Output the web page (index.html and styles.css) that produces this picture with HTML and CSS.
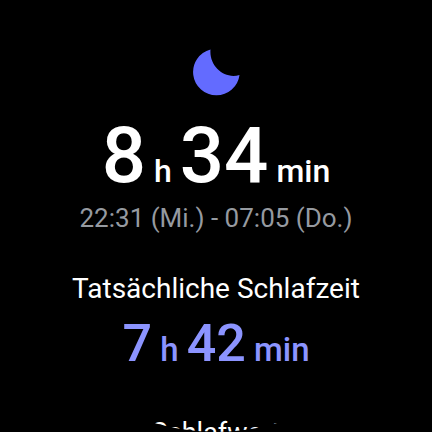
FILE: index.html
```html
<!DOCTYPE html>
<html lang="de">
<head>
<meta charset="utf-8">
<title>Schlaf</title>
<link rel="stylesheet" href="styles.css">
</head>
<body>
<main class="screen">
  <svg class="moon" viewBox="0 0 48 48" aria-hidden="true">
    <path d="M18.500 1.500A23.300 23.300 0 1 0 47.500 27C32 31.500 17 18 18.500 1.500Z"/>
  </svg>
  <h1 class="total">8<span class="unit"> h </span>34<span class="unit"> min</span></h1>
  <p class="range">22:31 (Mi.) - 07:05 (Do.)</p>
  <h2 class="label">Tatsächliche Schlafzeit</h2>
  <p class="actual">7<span class="unit"> h </span>42<span class="unit"> min</span></p>
  <h2 class="label label-edge">Schlafwert</h2>
</main>
</body>
</html>
```
FILE: styles.css
```css
* {
  box-sizing: border-box;
  margin: 0;
  padding: 0;
}

html {
  background: #000;
}

body {
  height: 100vh;
  overflow: hidden;
  background: #000;
  color: #fff;
  font-family: Roboto, "Liberation Sans", sans-serif;
}

/* Round watch face: content is clipped to the circle. */
.screen {
  display: flex;
  flex-direction: column;
  align-items: center;
  height: 100vh;
  padding-top: 48px;
  overflow: hidden;
  white-space: nowrap;
  clip-path: circle(50%);
}

.screen > * {
  flex: none;
}

.moon {
  width: 48px;
  height: 48px;
  fill: #636bff;
}

.total {
  margin-top: 29px;
  font-size: 78px;
  font-weight: 500;
  line-height: 62px;
}

.unit {
  font-size: 32px;
}

.range {
  margin-bottom: 36px;
  font-size: 26px;
  line-height: 32px;
  color: #969aa0;
}

.label {
  font-size: 28px;
  font-weight: 400;
  line-height: 38px;
}

.label-edge {
  font-size: 27px;
}

.actual {
  margin-bottom: 28px;
  font-size: 52px;
  font-weight: 500;
  line-height: 72px;
  color: #8c94ff;
}

.actual .unit {
  font-size: 33px;
}
```
